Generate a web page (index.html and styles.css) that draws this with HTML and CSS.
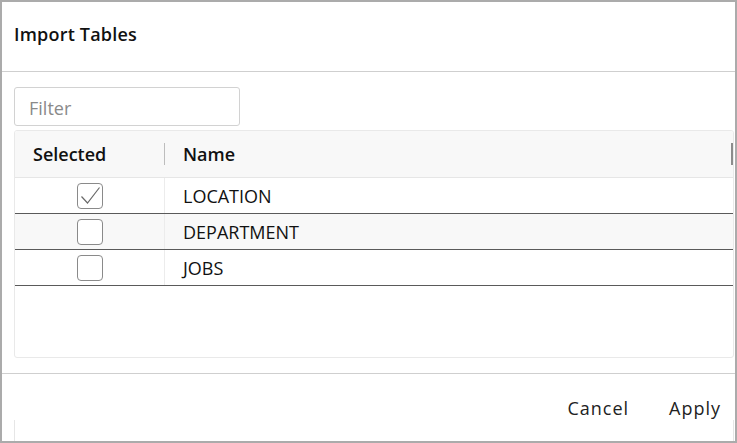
FILE: index.html
```html
<!DOCTYPE html>
<html>
<head>
<meta charset="utf-8">
<link rel="stylesheet" href="styles.css">
</head>
<body>
<div class="dialog">
  <div class="header"><span class="title">Import Tables</span></div>
  <div class="content">
    <div class="filter">Filter</div>
    <div class="table">
      <div class="thead">
        <div class="th sel">Selected</div>
        <div class="th name">Name</div>
        <div class="grip"></div>
      </div>
      <div class="row">
        <div class="cell sel"><span class="cb"><svg viewBox="0 0 26 26" width="26" height="26"><path d="M4.5 13.5 L10.5 20 L22.5 4.5" fill="none" stroke="#6a6a6a" stroke-width="1.2"/></svg></span></div>
        <div class="cell name">LOCATION</div>
      </div>
      <div class="row alt">
        <div class="cell sel"><span class="cb"></span></div>
        <div class="cell name">DEPARTMENT</div>
      </div>
      <div class="row">
        <div class="cell sel"><span class="cb"></span></div>
        <div class="cell name">JOBS</div>
      </div>
    </div>
  </div>
  <div class="footer">
    <div class="buttons">
      <span class="btn">Cancel</span>
      <span class="btn">Apply</span>
    </div>
    <div class="below"></div>
  </div>
</div>
</body>
</html>
```
FILE: styles.css
```css
* { box-sizing: border-box; }
html, body { margin: 0; padding: 0; }
body {
  width: 737px;
  height: 443px;
  overflow: hidden;
  font-family: "Open Sans", "Noto Sans", sans-serif;
  color: #1a1a1a;
  background: #fff;
}
.dialog {
  width: 737px;
  height: 443px;
  border: 2px solid #ababab;
  display: flex;
  flex-direction: column;
  overflow: hidden;
}
.header {
  height: 70px;
  border-bottom: 1px solid #cfcfcf;
  display: flex;
  align-items: center;
  padding-left: 12px;
  flex: none;
}
.title {
  font-size: 18px;
  font-weight: 600;
  color: #111;
  margin-top: -6px;
  letter-spacing: 0.2px;
}
.content {
  padding: 15px 1px 0 12px;
  height: 302px;
  border-bottom: 1px solid #cfcfcf;
  flex: none;
}
.filter {
  width: 226px;
  height: 39px;
  border: 1px solid #d2d2d2;
  border-radius: 3px;
  font-size: 18px;
  color: #8a8a8a;
  padding-left: 14px;
  padding-top: 2px;
  display: flex;
  align-items: center;
}
.table {
  margin-top: 4px;
  width: 720px;
  height: 228px;
  border: 1px solid #e9e9e9;
  border-radius: 3px;
  overflow: hidden;
}
.thead {
  height: 47px;
  background: #f8f8f8;
  border-bottom: 1px solid #e6e6e6;
  display: flex;
  align-items: center;
  position: relative;
}
.th {
  font-size: 18px;
  font-weight: 600;
  color: #111;
  padding-left: 18px;
}
.th.sel {
  width: 150px;
  border-right: 1px solid #bdbdbd;
  height: 22px;
  line-height: 22px;
}
.th.name { flex: 1; }
.grip {
  position: absolute;
  right: 0;
  top: 12px;
  width: 2px;
  height: 22px;
  background: #8c8c8c;
}
.row {
  height: 36px;
  border-bottom: 1px solid #5a5a5a;
  display: flex;
}
.row.alt { background: #f8f8f8; }
.cell {
  display: flex;
  align-items: center;
  font-size: 18px;
  color: #111;
}
.cell.sel {
  width: 150px;
  border-right: 1px solid #ececec;
  justify-content: center;
  padding-left: 1px;
}
.cell.name {
  flex: 1;
  padding-left: 18px;
  padding-top: 1px;
}
.cb {
  width: 26px;
  height: 26px;
  border: 1px solid #8a8a8a;
  border-radius: 4px;
  background: #fff;
  display: block;
  position: relative;
}
.cb svg {
  position: absolute;
  left: -1px;
  top: -1px;
}
.footer {
  flex: 1;
  display: flex;
  flex-direction: column;
}
.buttons {
  height: 46px;
  display: flex;
  justify-content: flex-end;
  align-items: flex-end;
  gap: 40px;
  padding-right: 14px;
}
.btn {
  font-size: 18px;
  color: #222;
  line-height: 24px;
  letter-spacing: 1px;
}
.below {
  margin-left: 12px;
  width: 720px;
  flex: 1;
  border-left: 1px solid #e6e6e6;
  border-right: 1px solid #e6e6e6;
}
```
